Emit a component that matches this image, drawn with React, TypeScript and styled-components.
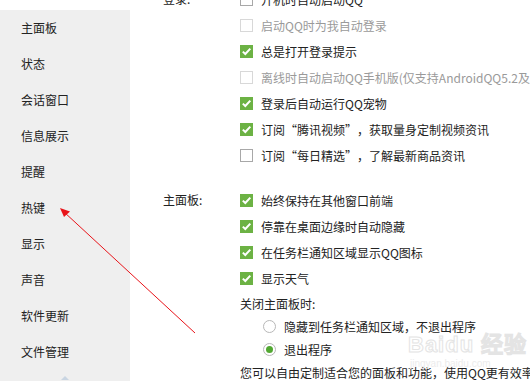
import React from "react";
import styled, { createGlobalStyle } from "styled-components";

const Global = createGlobalStyle`
  html, body { margin: 0; padding: 0; background: #fff; }
  body {
    width: 530px; height: 381px; overflow: hidden;
    font-family: "Noto Sans CJK SC", "Noto Sans", sans-serif;
    font-size: 12px; color: #222;
  }
`;

const Page = styled.div`
  position: relative;
  width: 530px;
  height: 381px;
  overflow: hidden;
  display: flex;
  align-items: flex-start;
`;

const Sidebar = styled.nav`
  width: 130px;
  height: 371px;
  margin-top: 10px;
  background: #efefef;
  display: flex;
  flex-direction: column;
  flex-shrink: 0;
`;

const NavItem = styled.div`
  height: 36px;
  line-height: 36px;
  padding-left: 21px;
  font-size: 12px;
  color: #222;
`;

const Caret = styled.div`
  align-self: center;
  margin-top: 6px;
  width: 0;
  height: 0;
  border-left: 4px solid transparent;
  border-right: 4px solid transparent;
  border-bottom: 4px solid #c9d5e2;
`;

const Main = styled.div`
  flex: 1;
  padding-left: 33px;
  display: flex;
  flex-direction: column;
  margin-top: -14px;
  white-space: nowrap;
  min-width: 0;
`;

const Section = styled.div<{ $gap?: number }>`
  display: grid;
  grid-template-columns: 77px 1fr;
  margin-top: ${(p) => p.$gap ?? 0}px;
`;

const Label = styled.div`
  height: 26px;
  line-height: 26px;
  color: #222;
`;

const Options = styled.div`
  display: flex;
  flex-direction: column;
  min-width: 0;
`;

const Row = styled.div<{ $h?: number; $indent?: number; $disabled?: boolean }>`
  height: ${(p) => p.$h ?? 26}px;
  display: flex;
  align-items: center;
  padding-left: ${(p) => p.$indent ?? 0}px;
  color: ${(p) => (p.$disabled ? "#9a9a9a" : "#222")};
`;

const Quote = styled.span<{ $open?: boolean }>`
  display: inline-block;
  width: 12px;
  text-align: ${(p) => (p.$open ? "right" : "left")};
`;

const Box = styled.span<{ $checked?: boolean; $disabled?: boolean }>`
  width: 13px;
  height: 13px;
  box-sizing: border-box;
  flex-shrink: 0;
  margin-right: 8px;
  background: ${(p) => (p.$checked ? "#6cb244" : "#fff")};
  border: 1px solid
    ${(p) => (p.$checked ? "#6cb244" : p.$disabled ? "#d8d8d8" : "#a8a8a8")};
  display: flex;
  align-items: center;
  justify-content: center;
`;

const Radio = styled.span<{ $checked?: boolean }>`
  width: 13px;
  height: 13px;
  box-sizing: border-box;
  border-radius: 50%;
  border: 1px solid #b8b8b8;
  background: #fff;
  margin-right: 8px;
  flex-shrink: 0;
  display: flex;
  align-items: center;
  justify-content: center;
  &::after {
    content: "";
    display: ${(p) => (p.$checked ? "block" : "none")};
    width: 7px;
    height: 7px;
    border-radius: 50%;
    background: #52a832;
  }
`;

const Overlay = styled.svg`
  position: absolute;
  left: 0;
  top: 0;
  pointer-events: none;
`;

const Watermark = styled.div`
  position: absolute;
  left: 408px;
  top: 332px;
  display: flex;
  flex-direction: column;
  pointer-events: none;
`;

const WmBig = styled.div`
  font-family: "Liberation Sans", Arial, sans-serif;
  font-size: 22px;
  font-weight: bold;
  line-height: 26px;
  color: transparent;
  -webkit-text-stroke: 1px #e4e4e4;
  letter-spacing: 1px;
`;

const WmSmall = styled.div`
  font-family: "Liberation Sans", Arial, sans-serif;
  font-size: 10px;
  line-height: 12px;
  color: #ececec;
  padding-left: 2px;
`;

const Check = () => (
  <svg width="11" height="11" viewBox="0 0 11 11">
    <path d="M1.8 5.6 L4.3 8 L9.3 2.6" fill="none" stroke="#fff" strokeWidth="2" />
  </svg>
);

const CheckRow = ({
  children,
  checked,
  disabled,
}: {
  children: React.ReactNode;
  checked?: boolean;
  disabled?: boolean;
}) => (
  <Row $disabled={disabled}>
    <Box $checked={checked} $disabled={disabled}>
      {checked && <Check />}
    </Box>
    <span>{children}</span>
  </Row>
);

const navItems = [
  "主面板",
  "状态",
  "会话窗口",
  "信息展示",
  "提醒",
  "热键",
  "显示",
  "声音",
  "软件更新",
  "文件管理",
];

export default function App() {
  return (
    <>
      <Global />
      <Page lang="zh-CN">
        <Sidebar>
          {navItems.map((n) => (
            <NavItem key={n}>{n}</NavItem>
          ))}
          <Caret />
        </Sidebar>
        <Main>
          <Section>
            <Label>登录:</Label>
            <Options>
              <CheckRow>开机时自动启动QQ</CheckRow>
              <CheckRow disabled>启动QQ时为我自动登录</CheckRow>
              <CheckRow checked>总是打开登录提示</CheckRow>
              <CheckRow disabled>离线时自动启动QQ手机版(仅支持AndroidQQ5.2及以上版本)</CheckRow>
              <CheckRow checked>登录后自动运行QQ宠物</CheckRow>
              <CheckRow checked>
                订阅<Quote $open>“</Quote>腾讯视频<Quote>”</Quote>，获取量身定制视频资讯
              </CheckRow>
              <CheckRow>
                订阅<Quote $open>“</Quote>每日精选<Quote>”</Quote>，了解最新商品资讯
              </CheckRow>
            </Options>
          </Section>
          <Section $gap={19}>
            <Label>主面板:</Label>
            <Options>
              <CheckRow checked>始终保持在其他窗口前端</CheckRow>
              <CheckRow checked>停靠在桌面边缘时自动隐藏</CheckRow>
              <CheckRow checked>在任务栏通知区域显示QQ图标</CheckRow>
              <CheckRow checked>显示天气</CheckRow>
              <Row $h={24}>关闭主面板时:</Row>
              <Row $h={23} $indent={23}>
                <Radio />
                隐藏到任务栏通知区域，不退出程序
              </Row>
              <Row $h={23} $indent={23}>
                <Radio $checked />
                退出程序
              </Row>
              <Row $h={22}>您可以自由定制适合您的面板和功能，使用QQ更有效率</Row>
            </Options>
          </Section>
        </Main>
        <Watermark>
          <WmBig>Baidu 经验</WmBig>
          <WmSmall>jingyan.baidu.com</WmSmall>
        </Watermark>
        <Overlay width="530" height="381">
          <line x1="64" y1="212" x2="195" y2="333" stroke="#e8141a" strokeWidth="1" />
          <polygon points="60,208 70,211.5 64,217" fill="#e8141a" />
        </Overlay>
      </Page>
    </>
  );
}
